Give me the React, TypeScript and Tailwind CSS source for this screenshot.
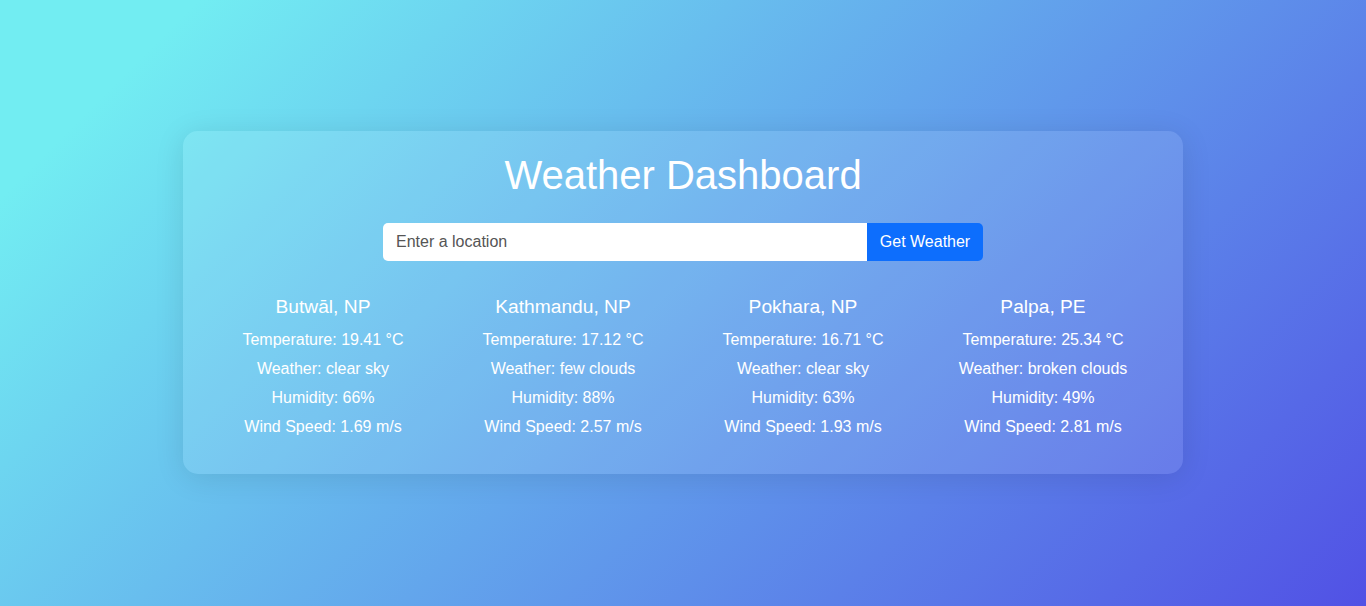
const cities = [
    { name: "Butwāl, NP", temp: "19.41", weather: "clear sky", humidity: 66, wind: "1.69" },
    { name: "Kathmandu, NP", temp: "17.12", weather: "few clouds", humidity: 88, wind: "2.57" },
    { name: "Pokhara, NP", temp: "16.71", weather: "clear sky", humidity: 63, wind: "1.93" },
    { name: "Palpa, PE", temp: "25.34", weather: "broken clouds", humidity: 49, wind: "2.81" },
];

function CityCard({ city }: { city: (typeof cities)[number] }) {
    return (
        <div className="w-[240px] flex flex-col items-center text-white">
            <h2 className="text-[19.2px] leading-[22px] mb-[13px]">{city.name}</h2>
            <p className="text-[16px] leading-[18px] mb-[11px]">Temperature: {city.temp} °C</p>
            <p className="text-[16px] leading-[18px] mb-[11px]">Weather: {city.weather}</p>
            <p className="text-[16px] leading-[18px] mb-[11px]">Humidity: {city.humidity}%</p>
            <p className="text-[16px] leading-[18px] mb-[11px]">Wind Speed: {city.wind} m/s</p>
        </div>
    );
}

export default function App() {
    return (
        <div
            className="w-full h-[606px] pb-[2px] flex items-center justify-center bg-[linear-gradient(135deg,#72EDF2_10%,#5151E5_100%)]"
            style={{ fontFamily: '"Liberation Sans", Arial, sans-serif' }}
        >
            <div className="w-[1000px] px-5 pt-[21px] pb-[27px] rounded-[15px] bg-white/10 shadow-[0_4px_30px_rgba(0,0,0,0.1)] flex flex-col items-center">
                <h1 className="text-[40px] leading-[46px] text-white mb-[25px]">Weather Dashboard</h1>
                <div className="flex mb-[35px]">
                    <input
                        type="text"
                        placeholder="Enter a location"
                        className="w-[484px] h-[38px] pl-[13px] pr-3 text-[16px] bg-white rounded-l-[5px] outline-none placeholder:text-[#555]"
                    />
                    <button className="w-[116px] h-[38px] bg-[#0d6efd] text-white text-[16px] rounded-r-[5px]">
                        Get Weather
                    </button>
                </div>
                <div className="flex">
                    {cities.map((c) => (
                        <CityCard key={c.name} city={c} />
                    ))}
                </div>
            </div>
        </div>
    );
}
